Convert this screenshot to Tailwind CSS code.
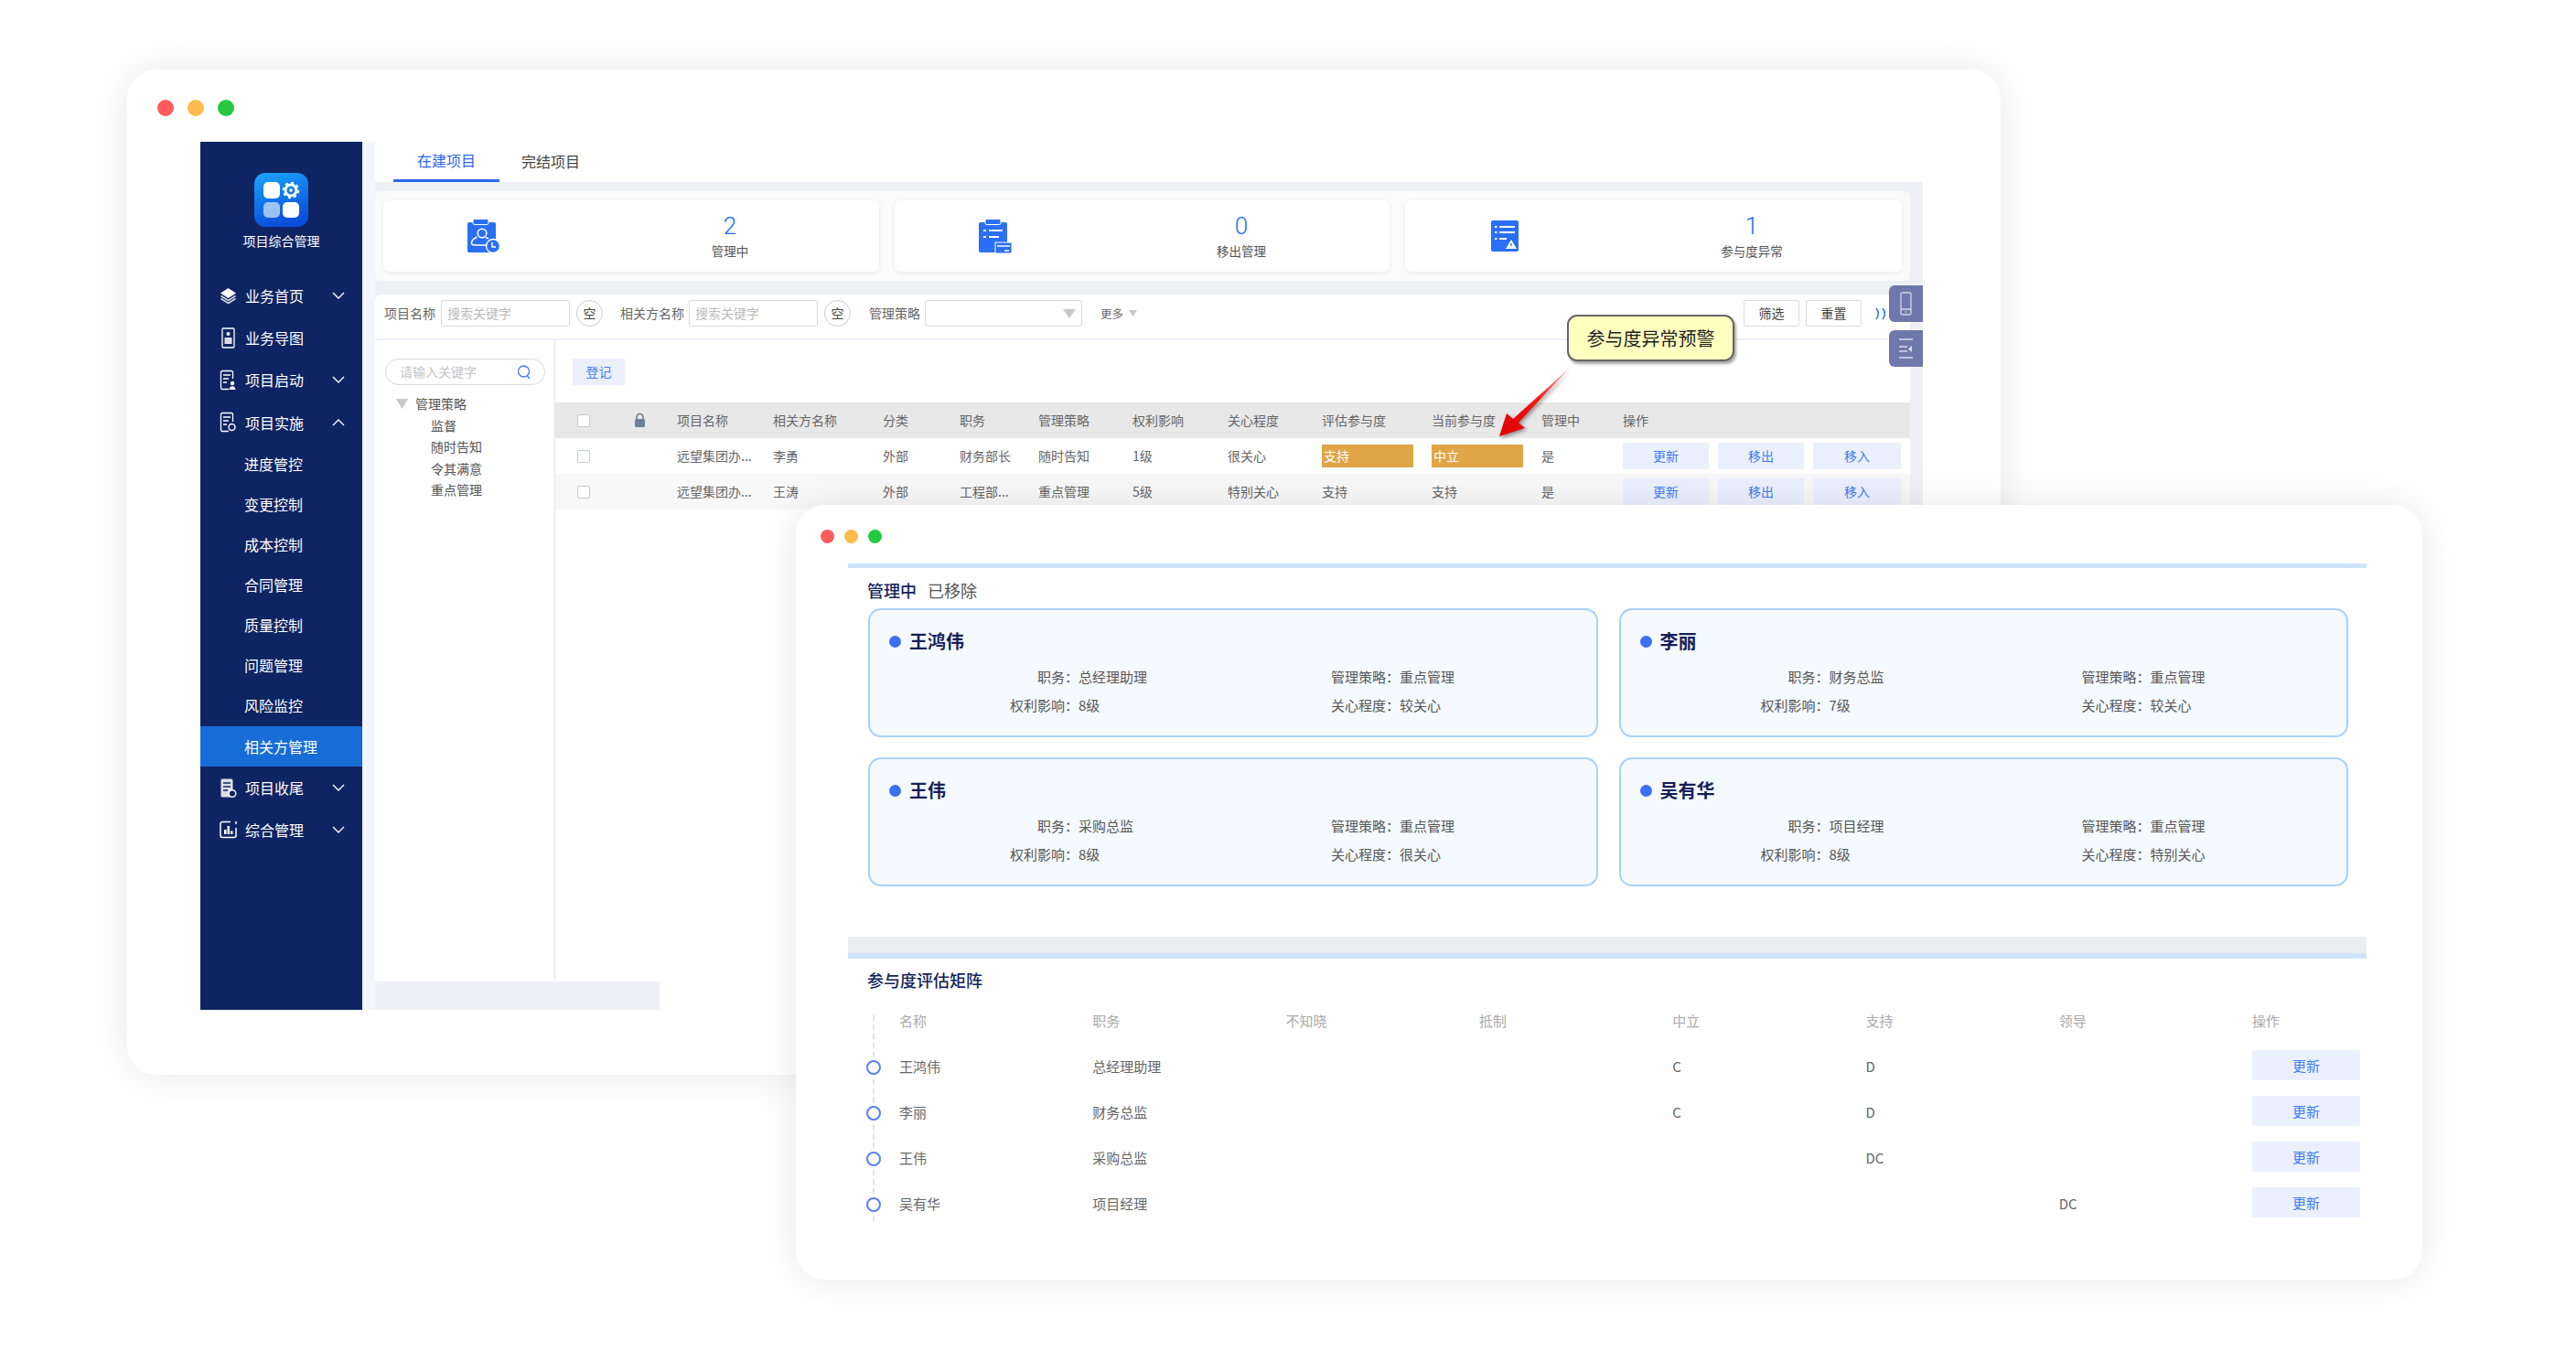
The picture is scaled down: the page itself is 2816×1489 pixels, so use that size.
<!doctype html>
<html lang="zh-CN">
<head>
<meta charset="utf-8">
<title>项目综合管理</title>
<script src="https://cdn.jsdelivr.net/npm/@tailwindcss/browser@4"></script>
</head>
<body class="bg-white">
<div class="relative w-[2816px] h-[1489px] overflow-hidden bg-white font-['Noto_Sans_CJK_SC','Noto_Sans',sans-serif] text-[14px] text-[#666]">

<!-- WINDOW 1 -->
<section class="absolute left-[139px] top-[76px] w-[2048px] h-[1099px] rounded-[32px] bg-white shadow-[0_0_45px_rgba(0,0,0,0.09)]">
  <div class="h-[79px] pl-[33px] pt-[33px] flex gap-[15px]">
    <span class="w-[18px] h-[18px] rounded-full bg-[#fc5d5b]"></span>
    <span class="w-[18px] h-[18px] rounded-full bg-[#fdbb4e]"></span>
    <span class="w-[18px] h-[18px] rounded-full bg-[#26c83f]"></span>
  </div>
  <div class="relative ml-[80px] w-[1883px] h-[949px] flex">
    <!-- sidebar -->
    <aside class="w-[177px] h-full bg-[#0f2463] text-white text-[16px] shrink-0">
      <div class="h-[145px] pt-[34px] flex flex-col items-center">
        <svg width="59" height="59" viewBox="0 0 59 59">
          <defs><linearGradient id="lg" x1="0" y1="0" x2="0.3" y2="1"><stop offset="0" stop-color="#1aa5fb"/><stop offset="1" stop-color="#0a4fdc"/></linearGradient></defs>
          <rect width="59" height="59" rx="12" fill="url(#lg)"/>
          <rect x="10" y="10" width="18" height="18" rx="5" fill="#fff"/>
          <rect x="10" y="32" width="18" height="17" rx="5" fill="#fff" fill-opacity=".6"/>
          <rect x="31" y="32" width="18" height="17" rx="5" fill="#fff"/>
          <circle cx="40" cy="19" r="6" fill="none" stroke="#fff" stroke-width="3"/>
          <circle cx="40" cy="19" r="8.200" fill="none" stroke="#fff" stroke-width="2.200" stroke-dasharray="3 3.400"/>
          <circle cx="40" cy="19" r="1.800" fill="#fff"/>
        </svg>
        <div class="mt-[5px] text-[14px] leading-[20px]">项目综合管理</div>
      </div>
      <nav class="flex flex-col">
        <a class="h-[46px] flex items-center pl-[21px]">
          <svg class="w-[19px] h-[19px]" viewBox="0 0 19 19"><path d="M9.500 1 18 6.500 9.500 12 1 6.500Z" fill="#fff"/><path d="M1.500 9.500 9.500 14.500 17.500 9.500M1.500 12.500 9.500 17.500 17.500 12.500" fill="none" stroke="#fff" stroke-opacity=".8" stroke-width="1.600"/></svg>
          <span class="ml-[9px]">业务首页</span>
          <svg class="ml-[31px] w-[14px] h-[8px]" viewBox="0 0 14 8"><path d="M1 1 7 7 13 1" fill="none" stroke="#fff" stroke-width="1.400"/></svg>
        </a>
        <a class="h-[46px] flex items-center pl-[21px]">
          <svg class="w-[19px] h-[23px]" viewBox="0 0 19 23"><rect x="3" y="1" width="13" height="21" rx="1" fill="none" stroke="#fff" stroke-width="1.300"/><circle cx="9.500" cy="7" r="2" fill="#fff"/><rect x="5.500" y="11" width="8" height="7" fill="#fff" fill-opacity=".85"/></svg>
          <span class="ml-[9px]">业务导图</span>
        </a>
        <a class="h-[46px] flex items-center pl-[21px]">
          <svg class="w-[19px] h-[23px]" viewBox="0 0 19 23"><path d="M10 21.500H3a1.500 1.500 0 0 1-1.500-1.500V3A1.500 1.500 0 0 1 3 1.500h10A1.500 1.500 0 0 1 14.500 3v7" fill="none" stroke="#fff" stroke-width="1.300"/><path d="M4 6h8M4 10h6M4 14h4" stroke="#fff" stroke-width="1.500"/><circle cx="14" cy="15" r="2.200" fill="#fff"/><path d="M10.500 22c0-5 7-5 7 0Z" fill="#fff"/></svg>
          <span class="ml-[9px]">项目启动</span>
          <svg class="ml-[31px] w-[14px] h-[8px]" viewBox="0 0 14 8"><path d="M1 1 7 7 13 1" fill="none" stroke="#fff" stroke-width="1.400"/></svg>
        </a>
        <a class="h-[47px] flex items-center pl-[21px]">
          <svg class="w-[19px] h-[23px]" viewBox="0 0 19 23"><path d="M10 21.500H3a1.500 1.500 0 0 1-1.500-1.500V3A1.500 1.500 0 0 1 3 1.500h10A1.500 1.500 0 0 1 14.500 3v8" fill="none" stroke="#fff" stroke-width="1.300"/><path d="M4 6h8M4 10h6M4 14h4" stroke="#fff" stroke-width="1.500"/><circle cx="13.500" cy="17" r="3.500" fill="none" stroke="#fff" stroke-width="1.400"/></svg>
          <span class="ml-[9px]">项目实施</span>
          <svg class="ml-[31px] w-[14px] h-[8px]" viewBox="0 0 14 8"><path d="M1 7 7 1 13 7" fill="none" stroke="#fff" stroke-width="1.400"/></svg>
        </a>
        <a class="h-[44px] flex items-center pl-[48px]">进度管控</a>
        <a class="h-[44px] flex items-center pl-[48px]">变更控制</a>
        <a class="h-[44px] flex items-center pl-[48px]">成本控制</a>
        <a class="h-[44px] flex items-center pl-[48px]">合同管理</a>
        <a class="h-[44px] flex items-center pl-[48px]">质量控制</a>
        <a class="h-[44px] flex items-center pl-[48px]">问题管理</a>
        <a class="h-[44px] flex items-center pl-[48px]">风险监控</a>
        <a class="h-[44px] flex items-center pl-[48px] mt-[1px] bg-[#176dd8]">相关方管理</a>
        <a class="h-[46px] flex items-center pl-[21px]">
          <svg class="w-[19px] h-[23px]" viewBox="0 0 19 23"><path d="M3 1.500h9.500a2 2 0 0 1 2 2V21.500H3a1.500 1.500 0 0 1-1.500-1.500V3A1.500 1.500 0 0 1 3 1.500Z" fill="#fff" fill-opacity=".85"/><path d="M4 6h8M4 10h8M4 14h5" stroke="#0f2463" stroke-width="1.400"/><circle cx="14" cy="17.500" r="3.800" fill="#0f2463" stroke="#fff" stroke-width="1.400"/></svg>
          <span class="ml-[9px]">项目收尾</span>
          <svg class="ml-[31px] w-[14px] h-[8px]" viewBox="0 0 14 8"><path d="M1 1 7 7 13 1" fill="none" stroke="#fff" stroke-width="1.400"/></svg>
        </a>
        <a class="h-[46px] flex items-center pl-[21px]">
          <svg class="w-[19px] h-[20px]" viewBox="0 0 19 20"><path d="M12 1.500H3A2 2 0 0 0 1 3.500v13a2 2 0 0 0 2 2h13a2 2 0 0 0 2-2V8M18 1v3" fill="none" stroke="#fff" stroke-width="1.500"/><path d="M5 15V10h2.500v5ZM8.500 15V6H11v9ZM12 15v-3.500h2.500V15Z" fill="#fff"/></svg>
          <span class="ml-[9px]">综合管理</span>
          <svg class="ml-[31px] w-[14px] h-[8px]" viewBox="0 0 14 8"><path d="M1 1 7 7 13 1" fill="none" stroke="#fff" stroke-width="1.400"/></svg>
        </a>
      </nav>
    </aside>
    <div class="w-[14px] bg-[#f2f5f9] shrink-0"></div>

    <!-- main -->
    <main class="relative w-[1692px] h-full flex flex-col bg-white">
      <div class="h-[44px] flex text-[16px] shrink-0">
        <div class="ml-[20px] w-[116px] h-[44px] border-b-[3px] border-[#2a68f0] text-[#2a68f0] text-center leading-[41px]">在建项目</div>
        <div class="ml-[24px] leading-[42px] text-[#444]">完结项目</div>
      </div>
      <div class="h-[874px] shrink-0 bg-[#eef0f5] pt-[10px]">
        <!-- stat panel -->
        <div class="w-[1678px] h-[98px] bg-[#fbfbfc] rounded-[6px] pt-[10px] pl-[9px] flex gap-[17px]">
          <div class="w-[542px] h-[78px] bg-white rounded-[6px] shadow-[0_1px_5px_rgba(0,0,0,0.08)] grid grid-cols-[218px_322px] items-center">
            <div class="flex justify-center">
              <svg width="40" height="40" viewBox="0 0 40 40"><rect x="3" y="5" width="31" height="33" rx="2" fill="#2a6ff5"/><rect x="9" y="1.500" width="17" height="6" rx="1.500" fill="#2a6ff5" stroke="#fff" stroke-width="1"/><circle cx="19" cy="17" r="4.800" fill="none" stroke="#fff" stroke-width="1.600"/><path d="M13.500 21c-4 2-6 4-6 6.500 0 2 1.500 2.500 4 2.500h13" fill="none" stroke="#fff" stroke-width="1.600"/><path d="M23 21.500 26 23" stroke="#fff" stroke-width="1.600"/><circle cx="31" cy="31" r="7.500" fill="#2a6ff5" stroke="#fff" stroke-width="1.400"/><path d="M30 27v5h4" fill="none" stroke="#fff" stroke-width="1.500"/></svg>
            </div>
            <div class="flex flex-col items-center">
              <span class="text-[26px] leading-[30px] font-['Roboto',sans-serif] font-light text-[#1a6dff]">2</span>
              <span class="mt-[2px] text-[13.500px] leading-[20px] text-[#555]">管理中</span>
            </div>
          </div>
          <div class="w-[541px] h-[78px] bg-white rounded-[6px] shadow-[0_1px_5px_rgba(0,0,0,0.08)] grid grid-cols-[218px_322px] items-center">
            <div class="flex justify-center">
              <svg width="40" height="40" viewBox="0 0 40 40"><rect x="3" y="5" width="31" height="33" rx="2" fill="#2a6ff5"/><rect x="10" y="1.500" width="17" height="6" rx="1.500" fill="#2a6ff5" stroke="#fff" stroke-width="1"/><path d="M8 14h3M14 14h15M8 21h3M14 21h11" stroke="#fff" stroke-width="2"/><rect x="21" y="27" width="18" height="12" fill="#2a6ff5" stroke="#fff" stroke-width="1"/><path d="M23 31h14" stroke="#fff" stroke-width="1.500"/><path d="M31 36h5" stroke="#fff" stroke-width="1.500"/></svg>
            </div>
            <div class="flex flex-col items-center">
              <span class="text-[26px] leading-[30px] font-['Roboto',sans-serif] font-light text-[#1a6dff]">0</span>
              <span class="mt-[2px] text-[13.500px] leading-[20px] text-[#555]">移出管理</span>
            </div>
          </div>
          <div class="w-[543px] h-[78px] bg-white rounded-[6px] shadow-[0_1px_5px_rgba(0,0,0,0.08)] grid grid-cols-[218px_322px] items-center">
            <div class="flex justify-center">
              <svg width="40" height="40" viewBox="0 0 40 40"><rect x="5" y="3" width="30" height="34" rx="2" fill="#2a6ff5"/><path d="M9 10h2.500M14 10h17M9 16h2.500M14 16h17M9 23h2.500M14 23h8" stroke="#fff" stroke-width="2"/><path d="M27 24 33 34H21Z" fill="#fff"/><path d="M27 28v3" stroke="#2a6ff5" stroke-width="1.400"/></svg>
            </div>
            <div class="flex flex-col items-center">
              <span class="text-[26px] leading-[30px] font-['Roboto',sans-serif] font-light text-[#1a6dff]">1</span>
              <span class="mt-[2px] text-[13.500px] leading-[20px] text-[#555]">参与度异常</span>
            </div>
          </div>
        </div>

        <!-- filter -->
        <div class="mt-[15px] w-[1678px] h-[50px] bg-white rounded-t-[6px] border-b-2 border-[#eef3fb] pl-[10px] pt-[6px] flex items-start text-[#666]">
          <span class="leading-[29px]">项目名称</span>
          <div class="ml-[6px] w-[141px] h-[29px] border border-[#d9d9d9] rounded-[3px] pl-[6px] leading-[27px] text-[#bbb]">搜索关键字</div>
          <div class="ml-[7px] w-[29px] h-[29px] border border-[#ccc] rounded-full text-center leading-[27px] text-[#444]">空</div>
          <span class="ml-[19px] leading-[29px]">相关方名称</span>
          <div class="ml-[5px] w-[141px] h-[29px] border border-[#d9d9d9] rounded-[3px] pl-[6px] leading-[27px] text-[#bbb]">搜索关键字</div>
          <div class="ml-[7px] w-[29px] h-[29px] border border-[#ccc] rounded-full text-center leading-[27px] text-[#444]">空</div>
          <span class="ml-[20px] leading-[29px]">管理策略</span>
          <div class="ml-[5px] w-[172px] h-[29px] border border-[#d9d9d9] rounded-[3px] flex items-center justify-end pr-[6px]">
            <svg width="14" height="10" viewBox="0 0 14 10"><path d="M0 0h14L7 10Z" fill="#c8c8c8"/></svg>
          </div>
          <span class="ml-[20px] text-[12.500px] leading-[29px]">更多</span>
          <svg class="ml-[6px] mt-[11px]" width="9" height="7" viewBox="0 0 9 7"><path d="M0 0h9L4.500 7Z" fill="#c8c8c8"/></svg>
          <div class="ml-[663px] w-[61px] h-[29px] border border-[#ddd] rounded-[2px] text-center leading-[27px] text-[#444] bg-white">筛选</div>
          <div class="ml-[7px] w-[61px] h-[29px] border border-[#ddd] rounded-[2px] text-center leading-[27px] text-[#444] bg-white">重置</div>
          <svg class="ml-[15px] mt-[8px]" width="14" height="14" viewBox="0 0 14 14"><path d="M1 1c3 3.500 3 8.500 0 12M8 1c3 3.500 3 8.500 0 12" fill="none" stroke="#2a78f0" stroke-width="1.600"/></svg>
        </div>

        <!-- body -->
        <div class="w-[1678px] h-[701px] bg-white flex">
          <div class="w-[197px] h-full border-r border-[#e4e4e4] pl-[11px] pt-[20px] text-[#555] shrink-0">
            <div class="w-[175px] h-[29px] border border-[#d9d9d9] rounded-full pl-[15px] pr-[14px] flex items-center justify-between text-[#c4c4c4]">
              <span>请输入关键字</span>
              <svg width="16" height="18" viewBox="0 0 16 18"><circle cx="7.500" cy="8" r="6" fill="none" stroke="#3f7df0" stroke-width="1.300"/><path d="M11.500 13 14 16" stroke="#3f7df0" stroke-width="1.300"/></svg>
            </div>
            <div class="mt-[9px] flex flex-col">
              <div class="h-[23.500px] flex items-center pl-[12px]">
                <svg width="13" height="11" viewBox="0 0 13 11"><path d="M0 0h13L6.500 11Z" fill="#c8c8c8"/></svg>
                <span class="ml-[8px]">管理策略</span>
              </div>
              <div class="h-[23.500px] flex items-center pl-[50px]">监督</div>
              <div class="h-[23.500px] flex items-center pl-[50px]">随时告知</div>
              <div class="h-[23.500px] flex items-center pl-[50px]">令其满意</div>
              <div class="h-[23.500px] flex items-center pl-[50px]">重点管理</div>
            </div>
          </div>
          <div class="flex-1 pt-[20px]">
            <div class="ml-[19px] w-[57px] h-[29px] bg-[#ebf0fe] rounded-[2px] text-center leading-[29px] text-[#3f7df0]">登记</div>
            <div class="mt-[19px]">
              <div class="h-[39px] bg-[#e8e8e8] grid grid-cols-[86px_47px_105px_120px_84px_86px_103px_104px_103px_120px_120px_89px_314px] items-center text-[#666]">
                <span class="ml-[24px] w-[14px] h-[14px] bg-white border-[1.500px] border-[#c4cbd6] rounded-[2px]"></span>
                <svg width="13" height="17" viewBox="0 0 13 17"><path d="M3 8V5a3.500 3.500 0 0 1 7 0v3" fill="none" stroke="#6f7f95" stroke-width="1.600"/><rect x="1" y="7" width="11" height="9" rx="1.500" fill="#6f7f95"/></svg>
                <span>项目名称</span><span>相关方名称</span><span>分类</span><span>职务</span><span>管理策略</span><span>权利影响</span><span>关心程度</span><span>评估参与度</span><span>当前参与度</span><span>管理中</span><span>操作</span>
              </div>
              <div class="h-[39px] bg-white grid grid-cols-[86px_47px_105px_120px_84px_86px_103px_104px_103px_120px_120px_89px_314px] items-center">
                <span class="ml-[24px] w-[14px] h-[14px] bg-white border-[1.500px] border-[#c4cbd6] rounded-[2px]"></span><span></span>
                <span>远望集团办...</span><span>李勇</span><span>外部</span><span>财务部长</span><span>随时告知</span><span>1级</span><span>很关心</span>
                <span class="w-[100px] h-[25px] bg-[#dfa546] text-white pl-[2px] leading-[25px]">支持</span>
                <span class="w-[100px] h-[25px] bg-[#dfa546] text-white pl-[2px] leading-[25px]">中立</span>
                <span>是</span>
                <div class="flex gap-[10px] text-[#3f7df0] text-center leading-[29px]"><span class="w-[94px] h-[29px] bg-[#ebf0fe]">更新</span><span class="w-[94px] h-[29px] bg-[#ebf0fe]">移出</span><span class="w-[96px] h-[29px] bg-[#ebf0fe]">移入</span></div>
              </div>
              <div class="h-[39px] bg-[#f8f8f8] grid grid-cols-[86px_47px_105px_120px_84px_86px_103px_104px_103px_120px_120px_89px_314px] items-center">
                <span class="ml-[24px] w-[14px] h-[14px] bg-white border-[1.500px] border-[#c4cbd6] rounded-[2px]"></span><span></span>
                <span>远望集团办...</span><span>王涛</span><span>外部</span><span>工程部...</span><span>重点管理</span><span>5级</span><span>特别关心</span>
                <span>支持</span><span>支持</span><span>是</span>
                <div class="flex gap-[10px] text-[#3f7df0] text-center leading-[29px]"><span class="w-[94px] h-[29px] bg-[#ebf0fe]">更新</span><span class="w-[94px] h-[29px] bg-[#ebf0fe]">移出</span><span class="w-[96px] h-[29px] bg-[#ebf0fe]">移入</span></div>
              </div>
            </div>
          </div>
        </div>
      </div>
      <div class="w-[311px] h-[31px] bg-[#eef0f5] shrink-0"></div>

      <!-- side tabs -->
      <div class="absolute right-0 top-[157px] w-[37px] h-[40px] bg-[#6f78ab] rounded-l-[6px] flex items-center justify-center">
        <svg width="13" height="26" viewBox="0 0 13 26"><rect x="1" y="1" width="11" height="24" rx="1.500" fill="none" stroke="#fff" stroke-opacity=".7" stroke-width="1.300"/><path d="M1 19h11M6.500 21v2" stroke="#fff" stroke-opacity=".7" stroke-width="1.300"/></svg>
      </div>
      <div class="absolute right-0 top-[206px] w-[37px] h-[40px] bg-[#6f78ab] rounded-l-[6px] flex items-center justify-center">
        <svg width="15" height="24" viewBox="0 0 15 24"><path d="M0 2h15M0 10h9M0 15h9M0 22h15" stroke="#fff" stroke-opacity=".75" stroke-width="1.600"/><path d="M14 9v7l-4-3.500Z" fill="#fff" fill-opacity=".75"/></svg>
      </div>
    </main>
  </div>

  <!-- callout -->
  <div class="absolute left-[1574px] top-[268px] w-[183px] h-[51px] bg-[#ffffc0] border-2 border-[#666] rounded-[11px] shadow-[2px_3px_3px_rgba(0,0,0,0.35)] text-center leading-[47px] text-[20px] text-[#222]">参与度异常预警</div>
  <svg class="absolute left-[1490px] top-[320px] drop-shadow-[2px_2px_2px_rgba(0,0,0,0.4)]" width="100" height="90" viewBox="0 0 100 90">
    <defs><linearGradient id="ar" x1="1" y1="0" x2="0" y2="1"><stop offset="0" stop-color="#ffb0b0"/><stop offset=".45" stop-color="#f01818"/><stop offset="1" stop-color="#e00000"/></linearGradient></defs>
    <path d="M86 7 31 66 38 72 10 81 18 56 25 62Z" fill="url(#ar)"/>
  </svg>
</section>

<!-- WINDOW 2 -->
<section class="absolute left-[870px] top-[552px] w-[1778px] h-[847px] rounded-[32px] bg-white shadow-[0_0_45px_rgba(0,0,0,0.09)]">
  <div class="h-[64px] pl-[27px] pt-[27px] flex gap-[11px]">
    <span class="w-[15px] h-[15px] rounded-full bg-[#fc5d5b]"></span>
    <span class="w-[15px] h-[15px] rounded-full bg-[#fdbb4e]"></span>
    <span class="w-[15px] h-[15px] rounded-full bg-[#26c83f]"></span>
  </div>
  <div class="ml-[57px] w-[1660px]">
    <div class="h-[5px] bg-[#cfe4fb]"></div>
    <div class="h-[44px] pl-[21px] pt-[11px] flex gap-[12px] text-[18px] leading-[26px]">
      <span class="text-[#141f5a] font-medium">管理中</span><span class="text-[#555]">已移除</span>
    </div>
    <div class="ml-[22px] w-[1618px] grid grid-cols-2 gap-x-[23px] gap-y-[22px] text-[15px] text-[#555]">
      <article class="h-[141px] border-2 border-[#a6d2fb] bg-[#f5faff] rounded-[14px]">
        <h3 class="mt-[19px] flex items-center h-[30px] pl-[21px] text-[20px] font-bold text-[#141f5a]"><span class="w-[13px] h-[13px] rounded-full bg-[#3c6ff5] mr-[9px]"></span>王鸿伟</h3>
        <div class="mt-[9px] flex h-[31px] items-center"><span class="w-[228px] text-right">职务：</span><span class="w-[276px]">总经理助理</span><span>管理策略：重点管理</span></div>
        <div class="flex h-[31px] items-center"><span class="w-[228px] text-right">权利影响：</span><span class="w-[276px]">8级</span><span>关心程度：较关心</span></div>
      </article>
      <article class="h-[141px] border-2 border-[#a6d2fb] bg-[#f5faff] rounded-[14px]">
        <h3 class="mt-[19px] flex items-center h-[30px] pl-[21px] text-[20px] font-bold text-[#141f5a]"><span class="w-[13px] h-[13px] rounded-full bg-[#3c6ff5] mr-[9px]"></span>李丽</h3>
        <div class="mt-[9px] flex h-[31px] items-center"><span class="w-[228px] text-right">职务：</span><span class="w-[276px]">财务总监</span><span>管理策略：重点管理</span></div>
        <div class="flex h-[31px] items-center"><span class="w-[228px] text-right">权利影响：</span><span class="w-[276px]">7级</span><span>关心程度：较关心</span></div>
      </article>
      <article class="h-[141px] border-2 border-[#a6d2fb] bg-[#f5faff] rounded-[14px]">
        <h3 class="mt-[19px] flex items-center h-[30px] pl-[21px] text-[20px] font-bold text-[#141f5a]"><span class="w-[13px] h-[13px] rounded-full bg-[#3c6ff5] mr-[9px]"></span>王伟</h3>
        <div class="mt-[9px] flex h-[31px] items-center"><span class="w-[228px] text-right">职务：</span><span class="w-[276px]">采购总监</span><span>管理策略：重点管理</span></div>
        <div class="flex h-[31px] items-center"><span class="w-[228px] text-right">权利影响：</span><span class="w-[276px]">8级</span><span>关心程度：很关心</span></div>
      </article>
      <article class="h-[141px] border-2 border-[#a6d2fb] bg-[#f5faff] rounded-[14px]">
        <h3 class="mt-[19px] flex items-center h-[30px] pl-[21px] text-[20px] font-bold text-[#141f5a]"><span class="w-[13px] h-[13px] rounded-full bg-[#3c6ff5] mr-[9px]"></span>吴有华</h3>
        <div class="mt-[9px] flex h-[31px] items-center"><span class="w-[228px] text-right">职务：</span><span class="w-[276px]">项目经理</span><span>管理策略：重点管理</span></div>
        <div class="flex h-[31px] items-center"><span class="w-[228px] text-right">权利影响：</span><span class="w-[276px]">8级</span><span>关心程度：特别关心</span></div>
      </article>
    </div>

    <div class="mt-[55px] h-[18px] bg-[#ebeef1]"></div>
    <div class="h-[6px] bg-[#cfe4fb]"></div>
    <h2 class="h-[44px] pl-[21px] pt-[10px] text-[18px] leading-[26px] font-medium text-[#141f5a]">参与度评估矩阵</h2>

    <div class="relative ml-[20px] text-[15px] text-[#666]">
      <div class="absolute left-[7px] top-[18px] h-[225px] border-l-2 border-dashed border-[#e2e2e2]"></div>
      <div class="h-[50px] pb-[2px] grid grid-cols-[36px_repeat(7,211.300px)_118px] items-center text-[#aaa]">
        <span></span><span>名称</span><span>职务</span><span>不知晓</span><span>抵制</span><span>中立</span><span>支持</span><span>领导</span><span>操作</span>
      </div>
      <div class="h-[50px] pb-[2px] grid grid-cols-[36px_repeat(7,211.300px)_118px] items-center">
        <span class="relative mt-[2px] w-[16px] h-[16px] rounded-full border-2 border-[#5b7ff5] bg-white"></span><span>王鸿伟</span><span>总经理助理</span><span></span><span></span><span>C</span><span>D</span><span></span>
        <span class="h-[33px] mb-[3px] bg-[#ebf0fe] text-[#3f7df0] text-center leading-[33px] rounded-[2px]">更新</span>
      </div>
      <div class="h-[50px] pb-[2px] grid grid-cols-[36px_repeat(7,211.300px)_118px] items-center">
        <span class="relative mt-[2px] w-[16px] h-[16px] rounded-full border-2 border-[#5b7ff5] bg-white"></span><span>李丽</span><span>财务总监</span><span></span><span></span><span>C</span><span>D</span><span></span>
        <span class="h-[33px] mb-[3px] bg-[#ebf0fe] text-[#3f7df0] text-center leading-[33px] rounded-[2px]">更新</span>
      </div>
      <div class="h-[50px] pb-[2px] grid grid-cols-[36px_repeat(7,211.300px)_118px] items-center">
        <span class="relative mt-[2px] w-[16px] h-[16px] rounded-full border-2 border-[#5b7ff5] bg-white"></span><span>王伟</span><span>采购总监</span><span></span><span></span><span></span><span>DC</span><span></span>
        <span class="h-[33px] mb-[3px] bg-[#ebf0fe] text-[#3f7df0] text-center leading-[33px] rounded-[2px]">更新</span>
      </div>
      <div class="h-[50px] pb-[2px] grid grid-cols-[36px_repeat(7,211.300px)_118px] items-center">
        <span class="relative mt-[2px] w-[16px] h-[16px] rounded-full border-2 border-[#5b7ff5] bg-white"></span><span>吴有华</span><span>项目经理</span><span></span><span></span><span></span><span></span><span>DC</span>
        <span class="h-[33px] mb-[3px] bg-[#ebf0fe] text-[#3f7df0] text-center leading-[33px] rounded-[2px]">更新</span>
      </div>
    </div>
  </div>
</section>
</div>
</body>
</html>
